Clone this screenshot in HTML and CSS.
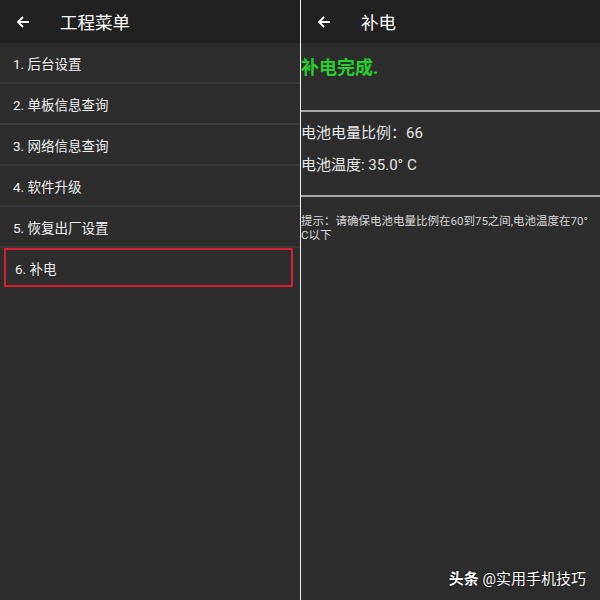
FILE: index.html
```html
<!DOCTYPE html>
<html lang="zh">
<head>
  <meta charset="UTF-8" />
  <title>工程菜单</title>
  <link rel="stylesheet" href="styles.css">
</head>
<body>
  <div class="screens">
    <div class="panel">
      <div class="appbar">
        <svg class="back" viewBox="0 0 16 16" width="16" height="16"><path d="M14 8H3M8 3L3 8l5 5" fill="none" stroke="#fff" stroke-width="1.8"/></svg>
        <span class="appbar-title">工程菜单</span>
      </div>
      <ul class="menu">
        <li>1. 后台设置</li>
        <li>2. 单板信息查询</li>
        <li>3. 网络信息查询</li>
        <li>4. 软件升级</li>
        <li>5. 恢复出厂设置</li>
        <li class="marked">6. 补电</li>
      </ul>
    </div>
    <div class="split"></div>
    <div class="panel">
      <div class="appbar">
        <svg class="back" viewBox="0 0 16 16" width="16" height="16"><path d="M14 8H3M8 3L3 8l5 5" fill="none" stroke="#fff" stroke-width="1.8"/></svg>
        <span class="appbar-title">补电</span>
      </div>
      <div class="status">补电完成.</div>
      <div class="info">
        <p>电池电量比例：66</p>
        <p>电池温度: 35.0° C</p>
      </div>
      <div class="hint">提示：请确保电池电量比例在60到75之间,电池温度在70° C以下</div>
    </div>
  </div>
  <div class="watermark"><b>头条</b> @实用手机技巧</div>
</body>
</html>
```

FILE: styles.css
```css
html, body {
  margin: 0;
  padding: 0;
  height: 100%;
  background: #2c2c2c;
  font-family: Roboto, "Noto Sans CJK SC", sans-serif;
  overflow: hidden;
}

.screens {
  display: grid;
  grid-template-columns: 300px 1px 299px;
  height: 600px;
}

.split {
  background: #f2f2f2;
}

.panel {
  background: #2d2d2d;
}

.appbar {
  height: 43px;
  background: #212121;
  display: flex;
  align-items: center;
  padding-left: 15px;
}

.back {
  margin-right: 29px;
}

.appbar-title {
  color: #fff;
  font-size: 17.5px;
}

.menu {
  list-style: none;
  margin: 0;
  padding: 0;
}

.menu li {
  height: 39px;
  border-bottom: 2px solid #3a3a3a;
  display: flex;
  align-items: center;
  padding-left: 13px;
  color: #f0f0f0;
  font-size: 13.5px;
}

.menu li.marked {
  height: 35px;
  margin: 0 7px 0 4px;
  padding-left: 9px;
  border: 2px solid #d6202c;
}

.status {
  height: 69px;
  border-bottom: 2px solid #a8a8a8;
  color: #25d02a;
  font-weight: bold;
  font-size: 18px;
  padding-top: 10px;
  box-sizing: border-box;
}

.info {
  height: 85px;
  border-bottom: 2px solid #a8a8a8;
  box-sizing: border-box;
  padding-top: 11px;
}

.info p {
  margin: 0 0 11px;
  color: #e6e6e6;
  font-size: 15px;
  line-height: 21px;
}

.hint {
  padding-top: 17px;
  color: #d8d8d8;
  font-size: 11.5px;
  line-height: 14px;
  padding-right: 6px;
}

.watermark {
  position: absolute;
  right: 14px;
  bottom: 12px;
  color: #fff;
  font-size: 15px;
  text-shadow: 0 0 2px #000;
}
```
